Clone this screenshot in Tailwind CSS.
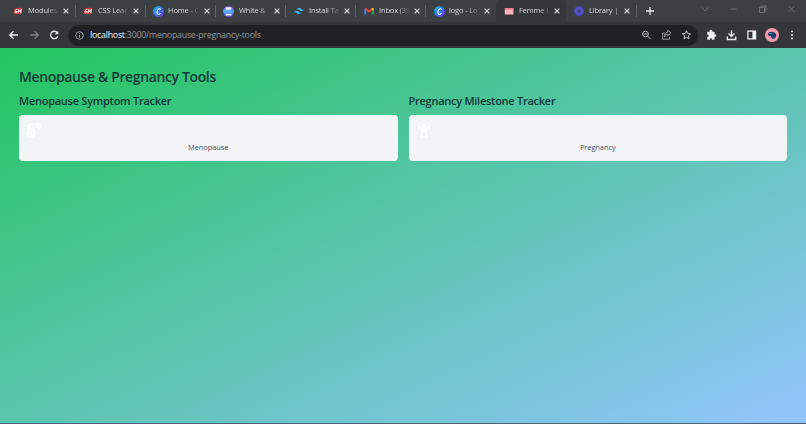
<!DOCTYPE html>
<html lang="en">
<head>
<meta charset="utf-8">
<title>Femme</title>
<script src="https://cdn.jsdelivr.net/npm/@tailwindcss/browser@4"></script>
</head>
<body class="w-[806px] h-[424px] overflow-hidden flex flex-col font-['Open_Sans','Noto_Sans',sans-serif]">
<svg class="absolute size-0">
  <symbol id="x" viewBox="0 0 8 8"><path d="M1.600 1.600l4.800 4.800M6.400 1.600l-4.800 4.800" stroke="#dcdee0" stroke-width="1.200" fill="none"/></symbol>
  <symbol id="gm" viewBox="0 0 10 10"><path d="M1.500 2.500Q5 1.500 9.500 1.800L8.600 8Q5 8 .7 8.300Z" fill="#c9343a"/><path d="M4.300 3.300C2.500 2.700 1.200 6.800 2.600 7c1 .1 1.500-1.600 1.500-1.600H3M4.900 7.200l.9-3.700.9 2.200 1.600-2.400-.5 3.900" fill="none" stroke="#fff" stroke-width=".9"/></symbol>
  <linearGradient id="cg" x1="0" y1="0" x2="1" y2="1"><stop stop-color="#12c6cf"/><stop offset=".5" stop-color="#3475ee"/><stop offset="1" stop-color="#7d2ae8"/></linearGradient>
  <linearGradient id="pg" x1="0" y1="0" x2="0" y2="1"><stop stop-color="#8a45f5"/><stop offset=".5" stop-color="#4f9cf0"/><stop offset="1" stop-color="#6734e8"/></linearGradient>
  <symbol id="canva" viewBox="0 0 10 10"><circle cx="5" cy="5" r="5" fill="url(#cg)"/><path d="M6.900 3.700C7 2.300 5.500 2.100 4.500 3.200 3.200 4.600 3.100 7.300 4.700 7.500c1 .1 1.700-.5 2.100-1.200" fill="none" stroke="#fff" stroke-width="1"/></symbol>
</svg>
<header class="h-[48px] shrink-0 bg-[#35363a] flex flex-col">
  <div class="h-[22px] pl-[6px] flex bg-[#3c4043] text-[7.5px] tracking-[-0.15px] text-[#d5d7da]">
    <div class="w-[70px] flex items-center pl-[7px] relative"><svg class="size-[10px]"><use href="#gm"/></svg><span class="ml-[5px] w-[30px] whitespace-nowrap [mask-image:linear-gradient(to_right,#000_60%,#0003)]">Modules</span><svg class="size-[8px] ml-[4px]"><use href="#x"/></svg><i class="absolute right-0 top-[5px] w-px h-[12px] bg-[#606468]"></i></div>
    <div class="w-[70px] flex items-center pl-[7px] relative"><svg class="size-[10px]"><use href="#gm"/></svg><span class="ml-[5px] w-[30px] whitespace-nowrap [mask-image:linear-gradient(to_right,#000_60%,#0003)]">CSS Lear</span><svg class="size-[8px] ml-[4px]"><use href="#x"/></svg><i class="absolute right-0 top-[5px] w-px h-[12px] bg-[#606468]"></i></div>
    <div class="w-[70px] flex items-center pl-[7px] relative"><svg class="size-[11px]"><use href="#canva"/></svg><span class="ml-[4px] w-[30px] whitespace-nowrap [mask-image:linear-gradient(to_right,#000_60%,#0003)]">Home - C</span><svg class="size-[8px] ml-[5px]"><use href="#x"/></svg><i class="absolute right-0 top-[5px] w-px h-[12px] bg-[#606468]"></i></div>
    <div class="w-[70px] flex items-center pl-[7px] relative"><svg class="size-[11px]" viewBox="0 0 10 10"><circle cx="5" cy="5" r="5" fill="url(#pg)"/><path d="M2.500 1.200h5v2.200h-5zM2.500 7h5v1.600h-5z" fill="#eef6ff"/><path d="M1 4h8v2h-8z" fill="#58b5f4"/></svg><span class="ml-[5px] w-[30px] whitespace-nowrap [mask-image:linear-gradient(to_right,#000_60%,#0003)]">White &amp;</span><svg class="size-[8px] ml-[4px]"><use href="#x"/></svg><i class="absolute right-0 top-[5px] w-px h-[12px] bg-[#606468]"></i></div>
    <div class="w-[70px] flex items-center pl-[8px] relative"><svg class="size-[10px]" viewBox="0 0 24 24"><path fill="#38bdf8" d="M12 4.800c-3.200 0-5.200 1.600-6 4.800 1.200-1.600 2.600-2.200 4.200-1.800.9.200 1.600.9 2.300 1.700C13.700 10.700 15.100 12 18 12c3.200 0 5.200-1.600 6-4.800-1.200 1.600-2.600 2.200-4.200 1.800-.9-.2-1.600-.9-2.300-1.700C16.300 6.100 14.900 4.800 12 4.800zM6 12c-3.200 0-5.200 1.600-6 4.800 1.200-1.600 2.600-2.200 4.200-1.800.9.200 1.600.9 2.300 1.700C7.700 17.900 9.100 19.200 12 19.200c3.200 0 5.200-1.600 6-4.800-1.200 1.600-2.600 2.200-4.200 1.800-.9-.2-1.600-.9-2.300-1.700C10.300 13.300 8.900 12 6 12z"/></svg><span class="ml-[5px] w-[30px] whitespace-nowrap [mask-image:linear-gradient(to_right,#000_60%,#0003)]">Install Ta</span><svg class="size-[8px] ml-[4px]"><use href="#x"/></svg><i class="absolute right-0 top-[5px] w-px h-[12px] bg-[#606468]"></i></div>
    <div class="w-[70px] flex items-center pl-[8px] relative"><svg class="size-[10px]" viewBox="0 0 10 10" fill="none" stroke-width="2"><path d="M1.200 8.500V3" stroke="#4285f4"/><path d="M8.800 8.500V3" stroke="#34a853"/><path d="M1 2.200L5 5.500 9 2.200" stroke="#ea4335"/><path d="M8.800 2v2" stroke="#fbbc04"/></svg><span class="ml-[5px] w-[30px] whitespace-nowrap [mask-image:linear-gradient(to_right,#000_60%,#0003)]">Inbox (39</span><svg class="size-[8px] ml-[4px]"><use href="#x"/></svg><i class="absolute right-0 top-[5px] w-px h-[12px] bg-[#606468]"></i></div>
    <div class="w-[70px] flex items-center pl-[8px]"><svg class="size-[11px] -mr-px"><use href="#canva"/></svg><span class="ml-[5px] w-[30px] whitespace-nowrap [mask-image:linear-gradient(to_right,#000_60%,#0003)]">logo - Lo</span><svg class="size-[8px] ml-[4px]"><use href="#x"/></svg></div>
    <div class="w-[70px] flex items-center pl-[8px] bg-[#35363a] rounded-t-[4px]"><svg class="size-[10px]" viewBox="0 0 10 10"><path d="M.8 2h8.600v6.500H.8z" fill="#ffb3bd"/><path d="M.8 2h8.600v1.500H.8z" fill="#ef7a8a"/></svg><span class="ml-[5px] w-[30px] whitespace-nowrap [mask-image:linear-gradient(to_right,#000_70%,#0003)]">Femme I</span><svg class="size-[8px] ml-[4px]"><use href="#x"/></svg></div>
    <div class="w-[71px] flex items-center pl-[8px] relative"><svg class="size-[10px]" viewBox="0 0 10 10"><circle cx="5" cy="5" r="2.900" fill="none" stroke="#5550dc" stroke-width="2.400"/><circle cx="5" cy="5" r="4.400" fill="none" stroke="#5550dc" stroke-width="1.100" stroke-dasharray="1.500 .8"/></svg><span class="ml-[5px] w-[30px] whitespace-nowrap [mask-image:linear-gradient(to_right,#000_80%,#0008)]">Library |</span><svg class="size-[8px] ml-[4px]"><use href="#x"/></svg><i class="absolute right-0 top-[5px] w-px h-[12px] bg-[#606468]"></i></div>
    <svg class="ml-[8px] mt-[6px] size-[10px]" viewBox="0 0 10 10"><path d="M5 1v8M1 5h8" stroke="#e3e5e7" stroke-width="1.300"/></svg>
    <svg class="ml-auto mr-[10px] mt-[4px] w-[98px] h-[10px]" viewBox="0 0 98 10" fill="none" stroke="#6e7276" stroke-width="1"><path d="M3.500 3.500L7 7l3.500-3.500M32.500 5h6M61.500 3.500h5v5h-5zM63 3.500V2h5v5h-1.500M90.500 2l6 6M96.500 2l-6 6"/></svg>
  </div>
  <div class="h-[26px] flex items-center">
    <svg class="w-[68px] h-[20px]" viewBox="0 0 68 20" fill="none" stroke-width="1.300"><path d="M18 10h-8M13.500 6.200L9.700 10l3.800 3.800" stroke="#e8eaed"/><path d="M30 10h8M34.500 6.200l3.800 3.800-3.800 3.800" stroke="#7d8084"/><path d="M57.400 8A3.700 3.700 0 1 0 57.800 11" stroke="#e8eaed"/><path d="M58.300 5.700v3.600h-3.600z" fill="#e8eaed"/></svg>
    <div class="w-[630px] h-[21px] rounded-full bg-[#202124] flex items-center text-[8.8px] tracking-[-0.23px] text-[#92969a] pl-[7px]">
      <svg class="size-[9px]" viewBox="0 0 9 9" fill="none" stroke="#9aa0a6"><circle cx="4.500" cy="4.500" r="3.800" stroke-width=".9"/><path d="M4.500 4v2.700M4.500 2.300v1"/></svg>
      <span class="ml-[6px] pt-[2px] whitespace-nowrap"><span class="text-[#f1f3f4]">localhost</span>:3000/menopause-pregnancy-tools</span>
      <svg class="ml-auto mr-[5px] w-[52px] h-[12px]" viewBox="0 0 52 12" fill="none" stroke="#bfc3c7" stroke-width="1"><circle cx="4.500" cy="5" r="2.800"/><path d="M6.600 7.100L9.500 10M3 5h3"/><path d="M23.500 4h-2v6.200h7V8M23.500 8c.2-2.300 1.600-3 3.300-3V6.800l3.200-2.900-3.200-2.700V3c-2.600.2-3.500 2.300-3.300 5z" stroke="#a2a6aa" stroke-width=".9"/><path d="M45.500 1.700l1.200 2.800 3 .3-2.300 2 .7 3-2.600-1.600-2.600 1.600.7-3-2.300-2 3-.3z"/></svg>
    </div>
    <svg class="w-[108px] h-[20px]" viewBox="0 0 108 20" fill="none"><path d="M9.500 7h2.200c-.7-2.700 3-2.700 2.500 0h2.100v2.400c2.300-.5 2.300 2.900 0 2.500v2.600h-2.200c.2-2-2.500-2-2.300 0H9.500v-2.400c1.900.2 1.900-2.700 0-2.500z" fill="#f1f3f4" stroke="#f1f3f4" stroke-width=".4"/><path d="M33.500 5.300v6M30.500 8.600l3 3 3-3M29.300 11.500v3h8.400v-3" stroke="#e8eaed" stroke-width="1.400"/><path d="M49.900 6.100h7.700v7.800h-7.700z" stroke="#f1f3f4" stroke-width="1.200"/><path d="M54.400 6h3.400v8h-3.400z" fill="#f1f3f4"/><circle cx="74" cy="10" r="7" fill="#f49aaa"/><path d="M70 9c.3-3 7-3.300 8 .3.600 2.300-.6 4.500-2.500 4.500-2 0-2.600-1.200-2.300-2.600-1.800.1-3.400-.6-3.200-2.200z" fill="#17406f"/><path d="M71 8.500h3" stroke="#4a8ec8"/><g fill="#e8eaed"><circle cx="94" cy="6.500" r="1"/><circle cx="94" cy="10" r="1"/><circle cx="94" cy="13.500" r="1"/></g></svg>
  </div>
</header>
<main class="flex-1 border-b border-[#49627a] bg-[linear-gradient(to_bottom_right,#22c55e,#93c5fd)] px-[19px] pt-[20px] text-[#12393a]">
  <h1 class="text-[14px] leading-[18px] font-semibold tracking-[-0.37px] whitespace-nowrap">Menopause &amp; Pregnancy Tools</h1>
  <div class="mt-[6px] grid grid-cols-2 gap-[11px]">
    <section>
      <h2 class="text-[11px] leading-[16px] mt-px font-semibold tracking-[-0.26px]">Menopause Symptom Tracker</h2>
      <div class="mt-[6px] h-[45.5px] rounded-[4px] bg-gray-100 pl-[7px] pt-[7px]">
        <svg class="w-[18px] h-[18px]" viewBox="0 0 18 18" fill="none" stroke="#fff"><path d="M2.500 9V4.500a2.500 2.500 0 0 1 5 0V9a3.500 3.500 0 1 1-5 0z" stroke-width="2"/><path d="M5 6v6" stroke-width="1.200"/><circle cx="5" cy="11.500" r="1.500" fill="#fff" stroke="none"/><circle cx="12.800" cy="3.800" r="2" stroke-width="1.700"/></svg>
        <p class="-ml-[7px] mt-px text-center text-[7.5px] leading-[12px] tracking-[-0.1px] text-gray-600">Menopause</p>
      </div>
    </section>
    <section>
      <h2 class="text-[11px] leading-[16px] mt-px font-semibold tracking-[-0.26px]">Pregnancy Milestone Tracker</h2>
      <div class="mt-[6px] h-[45.5px] rounded-[4px] bg-gray-100 pl-[7px] pt-[7px]">
        <svg class="w-[18px] h-[18px]" viewBox="0 0 18 18" fill="none" stroke="#fff" stroke-linecap="round"><circle cx="8" cy="3" r="2.300" fill="#fff" stroke="none"/><path d="M3 4.500C5.500 8 10.500 8 13 4.500" stroke-width="2.200"/><path d="M5.200 6.500h5.600v3.500H5.200z" fill="#fff" stroke="none"/><path d="M5.700 12l-.7 1.200 1 1.300M10.300 12l.7 1.200-1 1.300" stroke-width="2.600" stroke-linejoin="round"/></svg>
        <p class="-ml-[7px] mt-px text-center text-[7.5px] leading-[12px] tracking-[-0.1px] text-gray-600">Pregnancy</p>
      </div>
    </section>
  </div>
</main>
</body>
</html>
